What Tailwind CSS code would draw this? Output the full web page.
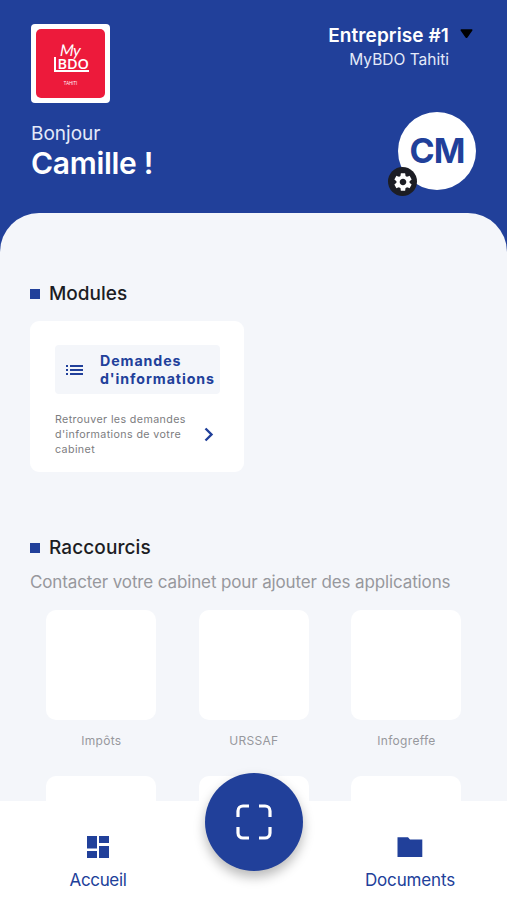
<!DOCTYPE html>
<html lang="fr">
<head>
<meta charset="utf-8">
<meta name="viewport" content="width=device-width, initial-scale=1">
<title>MyBDO Tahiti</title>
<script src="https://cdn.jsdelivr.net/npm/@tailwindcss/browser@4"></script>
</head>
<body class="bg-[#21409a] font-['Inter',sans-serif] antialiased">
<div class="relative flex h-[900px] w-[507px] flex-col overflow-hidden">
  <header class="flex h-[213px] shrink-0 justify-between bg-[#21409a] pl-[31px] pr-[31px] pt-6 text-white">
    <div class="flex flex-col items-start">
      <div class="h-[79px] w-[79px] rounded-[4px] bg-white p-[5px]">
        <div class="flex h-full flex-col items-center rounded-[5px] bg-[#ed1a3b] pt-[13px]">
          <span class="-skew-x-3 font-['Lato'] text-[16px] font-normal italic leading-[16px] tracking-[-0.5px]">My</span>
          <div class="-mt-[1px] ml-[1px] h-[15px] w-[35px] border-b-2 border-l-2 border-white pl-[2px] font-['Open_Sans'] text-[14.5px] font-semibold leading-[13px] tracking-[-0.1px]">BDO</div>
          <span class="mt-[8px] font-['Open_Sans'] text-[4.5px] leading-[6px]">TAHITI</span>
        </div>
      </div>
      <p class="mt-[19px] text-[19px] leading-6 text-[#e4eaf9]">Bonjour</p>
      <h1 class="-mt-px text-[30px] font-semibold leading-[37px] tracking-[-0.3px]">Camille !</h1>
    </div>
    <div class="flex flex-col items-end">
      <div class="flex items-start gap-[11px]">
        <div class="flex flex-col items-end">
          <span class="text-[19px] font-semibold leading-[24px] tracking-[0.1px]">Entreprise #1</span>
          <span class="mt-px text-[15.5px] leading-[21px] text-[#e4eaf9]">MyBDO Tahiti</span>
        </div>
        <svg class="mr-[3px] mt-[5px] h-[10px] w-[13px]" viewBox="0 0 13 10"><path d="M1.2 1h10.6L6.9 8.2h-.8z" stroke="#000" stroke-width="1.4" stroke-linejoin="round"/></svg>
      </div>
      <div class="relative mt-[42px] flex h-[78px] w-[78px] items-center justify-center rounded-full bg-white text-[34px] font-bold leading-none tracking-[-1px] text-[#21409a]">CM
        <span class="absolute -bottom-[6px] -left-[10px] flex h-[29px] w-[29px] items-center justify-center rounded-full bg-[#1c1d24]">
          <svg class="h-[22px] w-[22px]" viewBox="0 0 24 24" fill="#fff"><path d="M19.14 12.94c.04-.3.06-.61.06-.94 0-.32-.02-.64-.07-.94l2.03-1.58a.49.49 0 0 0 .12-.61l-1.92-3.32a.488.488 0 0 0-.59-.22l-2.39.96c-.5-.38-1.03-.7-1.62-.94l-.36-2.54a.484.484 0 0 0-.48-.41h-3.84c-.24 0-.43.17-.47.41l-.36 2.54c-.59.24-1.13.57-1.62.94l-2.39-.96c-.22-.08-.47 0-.59.22L2.74 8.87c-.12.21-.08.47.12.61l2.03 1.58c-.05.3-.09.63-.09.94s.02.64.07.94l-2.03 1.58a.49.49 0 0 0-.12.61l1.92 3.32c.12.22.37.29.59.22l2.39-.96c.5.38 1.03.7 1.62.94l.36 2.54c.05.24.24.41.48.41h3.84c.24 0 .44-.17.47-.41l.36-2.54c.59-.24 1.13-.56 1.62-.94l2.39.96c.22.08.47 0 .59-.22l1.92-3.32c.12-.22.07-.47-.12-.61l-2.01-1.58zM12 15.6c-1.98 0-3.6-1.62-3.6-3.6s1.62-3.6 3.6-3.6 3.6 1.62 3.6 3.6-1.62 3.6-3.6 3.6z"/></svg>
        </span>
      </div>
    </div>
  </header>

  <main class="flex-1 rounded-t-[39px] bg-[#f4f6fa] px-[30px] pt-[69px]">
    <h2 class="flex items-center gap-[9px] text-[19px] font-medium leading-6 text-[#1c1d24]"><span class="h-[10px] w-[10px] bg-[#21409a]"></span>Modules</h2>
    <section class="mt-[15px] h-[151px] w-[214px] rounded-[9px] bg-white pl-[25px] pr-6 pt-6">
      <div class="flex h-[49px] items-center rounded-[4px] bg-[#f4f6fa] pl-[11px] text-[#21409a]">
        <svg class="h-[10px] w-[17px] shrink-0" viewBox="0 0 17 10" fill="currentColor"><path d="M0 0h2v2H0zM0 4h2v2H0zM0 8h2v2H0zM4 0h13v2H4zM4 4h13v2H4zM4 8h13v2H4z"/></svg>
        <h3 class="ml-[17px] text-[14.2px] font-bold leading-[18px] tracking-[0.92px]">Demandes<br>d'informations</h3>
      </div>
      <div class="mt-[17.5px] flex items-center justify-between">
        <p class="whitespace-nowrap text-[10.7px] leading-[15.4px] tracking-[0.38px] text-[#7c7c80]">Retrouver les demandes<br>d'informations de votre<br>cabinet</p>
        <svg class="mr-[6px] h-[15px] w-[10px]" viewBox="0 0 10 15"><path d="M1.5 1.5l6 6-6 6" fill="none" stroke="#21409a" stroke-width="2.4"/></svg>
      </div>
    </section>
    <h2 class="mt-[64px] flex items-center gap-[9px] text-[19px] font-medium leading-6 tracking-[0.1px] text-[#1c1d24]"><span class="h-[10px] w-[10px] bg-[#21409a]"></span>Raccourcis</h2>
    <p class="mt-[10px] whitespace-nowrap text-[17px] leading-6 tracking-[-0.13px] text-[#97989d]">Contacter votre cabinet pour ajouter des applications</p>
    <div class="-mx-[5px] mt-[16px] grid grid-cols-[repeat(3,152.6px)] gap-y-[24px] text-center text-[12px] leading-4 tracking-[0.3px] text-[#97989d]">
      <div class="flex h-[142px] flex-col items-center"><div class="h-[110px] w-[110px] rounded-[10px] bg-white"></div><span class="mt-[13px]">Impôts</span></div>
      <div class="flex h-[142px] flex-col items-center"><div class="h-[110px] w-[110px] rounded-[10px] bg-white"></div><span class="mt-[13px]">URSSAF</span></div>
      <div class="flex h-[142px] flex-col items-center"><div class="h-[110px] w-[110px] rounded-[10px] bg-white"></div><span class="mt-[13px]">Infogreffe</span></div>
      <div class="mx-auto h-[110px] w-[110px] rounded-[10px] bg-white"></div>
      <div class="mx-auto h-[110px] w-[110px] rounded-[10px] bg-white"></div>
      <div class="mx-auto h-[110px] w-[110px] rounded-[10px] bg-white"></div>
    </div>
  </main>

  <nav class="absolute inset-x-0 bottom-0 flex h-[99px] justify-between bg-white pl-[48px] pr-[47px] text-[17px] leading-6 text-[#21409a]">
    <a class="flex w-[100px] flex-col items-center pt-[34px]">
      <svg class="h-6 w-6" viewBox="0 0 24 24" fill="currentColor"><path d="M1 1h10v12.5H1zM13 1h10v7H13zM1 16h10v7H1zM13 11h10v12H13z"/></svg>
      <span class="mt-[9px] tracking-[-0.35px]">Accueil</span>
    </a>
    <a class="flex w-[100px] flex-col items-center pt-[34px]">
      <svg class="h-6 w-[26px]" viewBox="0 0 26 24" fill="currentColor"><path d="M.5 2.3H11l2 2.2h12.3V22H.5z"/></svg>
      <span class="mt-[9px] tracking-[-0.15px]">Documents</span>
    </a>
    <button class="absolute -top-[28px] left-[205px] flex h-[98px] w-[98px] items-center justify-center rounded-full bg-[#21409a] shadow-[0_6px_12px_rgba(0,0,0,0.28)]">
      <svg class="h-9 w-9" viewBox="0 0 36 36" fill="none" stroke="#fff" stroke-width="3.2"><path d="M2 13V7a5 5 0 0 1 5-5h6M23 2h6a5 5 0 0 1 5 5v6M34 23v6a5 5 0 0 1-5 5h-6M13 34H7a5 5 0 0 1-5-5v-6"/></svg>
    </button>
  </nav>
</div>
</body>
</html>
